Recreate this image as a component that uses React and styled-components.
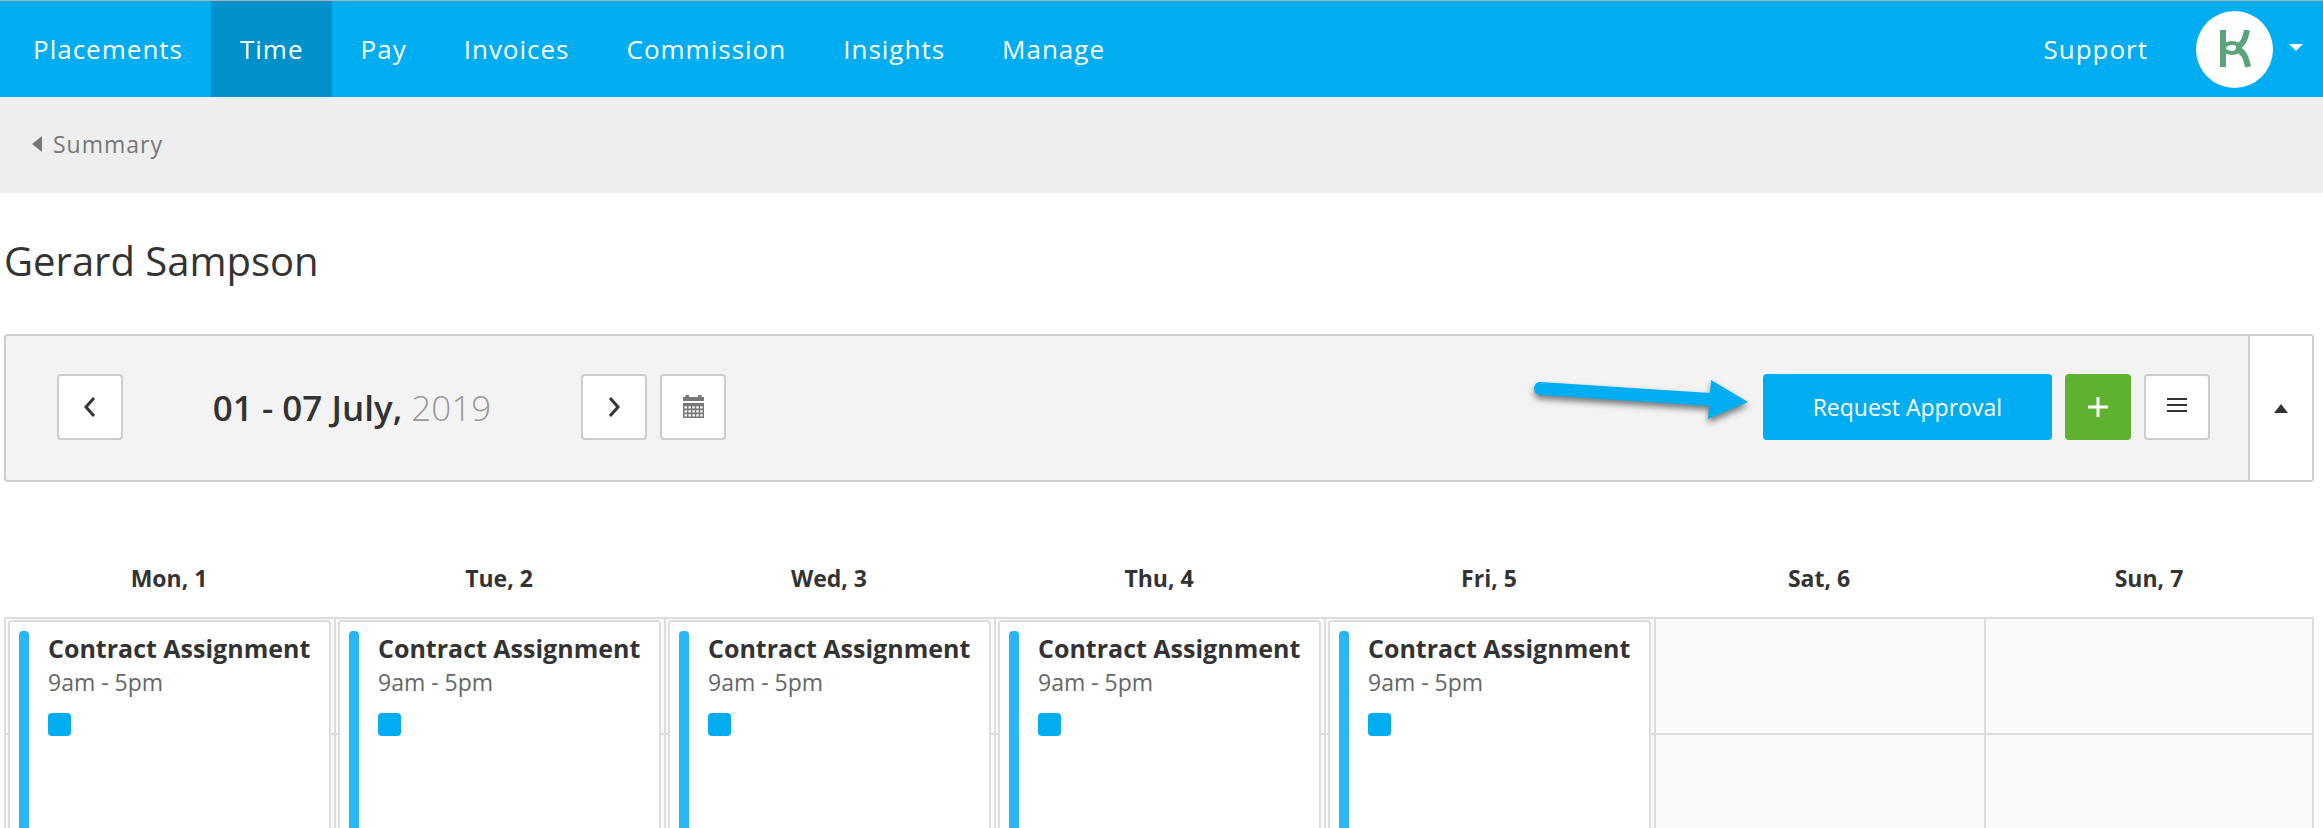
import * as React from "react";
import styled, { createGlobalStyle } from "styled-components";

const GlobalStyle = createGlobalStyle`
    *,
    *::before,
    *::after {
        box-sizing: border-box;
    }

    body {
        margin: 0;
        background: #fff;
        color: #333;
        font-family: "Open Sans", "Liberation Sans", sans-serif;
        font-size: 23px;
        overflow-x: hidden;
    }

    button {
        font: inherit;
        cursor: pointer;
    }
`;

const links = [
    "Placements",
    "Time",
    "Pay",
    "Invoices",
    "Commission",
    "Insights",
    "Manage",
];

const shift = { title: "Contract Assignment", hours: "9am - 5pm" };

const days = [
    { label: "Mon, 1", shift },
    { label: "Tue, 2", shift },
    { label: "Wed, 3", shift },
    { label: "Thu, 4", shift },
    { label: "Fri, 5", shift },
    { label: "Sat, 6" },
    { label: "Sun, 7" },
];

const App = () => {
    const [active, setActive] = React.useState("Time");

    return (
        <React.Fragment>
            <GlobalStyle />
            <Header>
                <Nav>
                    {links.map((link) => (
                        <NavLink
                            key={link}
                            href="#"
                            $active={link === active}
                            onClick={() => setActive(link)}
                        >
                            {link}
                        </NavLink>
                    ))}
                </Nav>
                <Account>
                    <SupportLink href="#">Support</SupportLink>
                    <AccountButton aria-label="Account menu">
                        <Avatar>
                            <Logo />
                        </Avatar>
                        <svg width="14" height="10" viewBox="0 0 14 10">
                            <path d="M0 0H14L7 7Z" fill="#fff" />
                        </svg>
                    </AccountButton>
                </Account>
            </Header>

            <SubHeader>
                <BackLink href="#">
                    <svg width="10" height="16" viewBox="0 0 10 16">
                        <path d="M10 0V16L0 8Z" fill="currentColor" />
                    </svg>
                    Summary
                </BackLink>
            </SubHeader>

            <Main>
                <Name>Gerard Sampson</Name>

                <Toolbar>
                    <DateNav>
                        <IconButton aria-label="Previous week">
                            <svg width="12" height="20" viewBox="0 0 12 20">
                                <Stroke d="M10 1L2 10L10 19" />
                            </svg>
                        </IconButton>
                        <Period>
                            01 - 07 July, <Year>2019</Year>
                        </Period>
                        <IconButton aria-label="Next week">
                            <svg width="12" height="20" viewBox="0 0 12 20">
                                <Stroke d="M2 1L10 10L2 19" />
                            </svg>
                        </IconButton>
                        <IconButton aria-label="Pick a date">
                            <CalendarIcon />
                        </IconButton>
                    </DateNav>

                    <Actions>
                        <Arrow />
                        <RequestButton>Request Approval</RequestButton>
                        <AddButton aria-label="Add">
                            <svg width="20" height="20" viewBox="0 0 20 20">
                                <path
                                    d="M10 0V20M0 10H20"
                                    stroke="#fff"
                                    strokeWidth="3"
                                />
                            </svg>
                        </AddButton>
                        <IconButton aria-label="More actions">
                            <svg width="20" height="18" viewBox="0 0 20 18">
                                <path
                                    d="M0 1H20M0 7H20M0 13H20"
                                    stroke="#333"
                                    strokeWidth="2"
                                />
                            </svg>
                        </IconButton>
                    </Actions>

                    <CollapseButton aria-label="Collapse">
                        <svg width="14" height="9" viewBox="0 0 14 9">
                            <path d="M0 9L7 0L14 9Z" fill="#333" />
                        </svg>
                    </CollapseButton>
                </Toolbar>

                <Week>
                    {days.map((day) => (
                        <DayLabel key={day.label}>{day.label}</DayLabel>
                    ))}
                    {days.map((day) => (
                        <DayColumn key={day.label}>
                            {day.shift && (
                                <Shift>
                                    <ShiftBar />
                                    <div>
                                        <ShiftTitle>{day.shift.title}</ShiftTitle>
                                        <ShiftHours>{day.shift.hours}</ShiftHours>
                                        <Tag />
                                    </div>
                                </Shift>
                            )}
                        </DayColumn>
                    ))}
                </Week>
            </Main>
        </React.Fragment>
    );
};

export default App;

const Logo = () => (
    <svg width="32" height="38" viewBox="0 0 32 38" fill="none">
        <g stroke="#5ca37c" strokeWidth="6">
            <path d="M4 0V37" />
            <path d="M28 0C26 10 24 15 17 17" />
            <path d="M29 37C27 27 25 22 17 18" />
            <ellipse cx="13" cy="18" rx="8" ry="5" strokeWidth="4" />
        </g>
    </svg>
);

const CalendarIcon = () => (
    <svg width="21" height="24" viewBox="0 0 21 24">
        <path d="M0 2H2.5V0H6V2H15V0H18.5V2H21V6H0Z" fill="#777" />
        <path d="M0 8H21V23H0Z" fill="#777" />
        <path
            d="M1.6 12.4H19.6M1.6 16.4H19.6M1.6 20.4H19.6"
            stroke="#fff"
            strokeWidth="2.4"
            strokeDasharray="2.4 1.5"
        />
    </svg>
);

const Arrow = () => (
    <ArrowSvg width="216" height="54" viewBox="0 0 216 54">
        <path
            d="M6 2L176 13L177 0L214 22L174 39L175 26L6 15Q0 14 0 8Q1 2 6 2Z"
            fill="#00adf0"
        />
    </ArrowSvg>
);

const ArrowSvg = styled.svg`
    overflow: visible;
    filter: drop-shadow(0 4px 3px rgb(0 0 0 / 50%));
`;

const Stroke = styled.path`
    fill: none;
    stroke: #333;
    stroke-width: 3px;
`;

const Header = styled.header`
    display: flex;
    justify-content: space-between;
    height: 97px;
    padding-left: 4px;
    border-top: 1px solid #a9b1b5;
    background: #00adf0;
`;

const Nav = styled.nav`
    display: flex;
`;

const NavLink = styled.a`
    display: flex;
    align-items: center;
    padding: 0 28px 0 29px;
    background: ${({ $active }) => ($active ? "#0091cb" : "transparent")};
    color: #fff;
    font-size: 26px;
    letter-spacing: 1px;
    text-decoration: none;
`;

const Account = styled.div`
    display: flex;
    align-items: center;
`;

const SupportLink = styled(NavLink)`
    padding: 0 48px;
`;

const AccountButton = styled.button`
    display: flex;
    align-items: center;
    gap: 16px;
    padding: 0 20px 0 0;
    border: 0;
    background: none;
`;

const Avatar = styled.span`
    display: flex;
    align-items: center;
    justify-content: center;
    width: 77px;
    height: 77px;
    border-radius: 50%;
    background: #fff;
`;

const SubHeader = styled.div`
    display: flex;
    align-items: center;
    height: 96px;
    padding: 0 32px 2px;
    background: #eee;
`;

const BackLink = styled.a`
    display: flex;
    align-items: center;
    gap: 11px;
    color: #777;
    letter-spacing: 1px;
    text-decoration: none;
`;

const Main = styled.main`
    padding: 40px 9px 0 4px;
`;

const Name = styled.h1`
    margin: 0 0 45px;
    font-size: 40px;
    font-weight: 400;
    line-height: 56px;
`;

const Toolbar = styled.div`
    display: flex;
    align-items: stretch;
    justify-content: space-between;
    height: 148px;
    border: 2px solid #ccc;
    border-radius: 4px;
    background: #f3f3f3;
`;

const DateNav = styled.div`
    display: flex;
    align-items: center;
    gap: 13px;
    padding: 0 0 2px 51px;
`;

const IconButton = styled.button`
    display: flex;
    align-items: center;
    justify-content: center;
    width: 66px;
    height: 66px;
    padding: 0;
    border: 2px solid #ccc;
    border-radius: 4px;
    background: #fff;
`;

const Period = styled.h2`
    width: 432px;
    margin: 0;
    font-size: 35px;
    font-weight: 600;
    text-align: center;
`;

const Year = styled.span`
    color: #999;
    font-weight: 300;
`;

const Actions = styled.div`
    display: flex;
    align-items: center;
    gap: 13px;
    margin-left: auto;
    padding: 0 38px 2px 0;
`;

const RequestButton = styled(IconButton)`
    width: auto;
    padding: 0 50px;
    border: 0;
    background: #00adf0;
    color: #fff;
`;

const AddButton = styled(IconButton)`
    border: 0;
    background: #5fb130;
`;

const CollapseButton = styled.button`
    display: flex;
    align-items: center;
    justify-content: center;
    width: 64px;
    padding: 0;
    border: 0;
    border-left: 2px solid #ccc;
    background: #fff;
`;

const Week = styled.section`
    display: grid;
    grid-template-columns: repeat(7, 1fr);
    margin-top: 80px;
`;

const DayLabel = styled.h3`
    margin: 0;
    padding-bottom: 23px;
    font-size: 23px;
    font-weight: 700;
    line-height: 32px;
    text-align: center;
`;

const DayColumn = styled.div`
    height: 460px;
    padding: 1px 3px 0 2px;
    border-top: 2px solid #ddd;
    border-left: 2px solid #ddd;
    background: repeating-linear-gradient(
        #fafafa 0 114px,
        #ddd 114px 116px
    );

    &:last-child {
        border-right: 2px solid #ddd;
    }
`;

const Shift = styled.article`
    display: flex;
    gap: 19px;
    height: 100%;
    padding: 9px;
    border: 2px solid #ddd;
    border-radius: 4px;
    background: #fff;
`;

const ShiftBar = styled.div`
    width: 10px;
    border-radius: 4px;
    background: #29b6f6;
`;

const ShiftTitle = styled.div`
    font-size: 25px;
    font-weight: 700;
    line-height: 34px;
    white-space: nowrap;
`;

const ShiftHours = styled.div`
    color: #666;
    line-height: 34px;
`;

const Tag = styled.div`
    width: 23px;
    height: 23px;
    margin-top: 14px;
    border-radius: 4px;
    background: #00adf0;
`;
